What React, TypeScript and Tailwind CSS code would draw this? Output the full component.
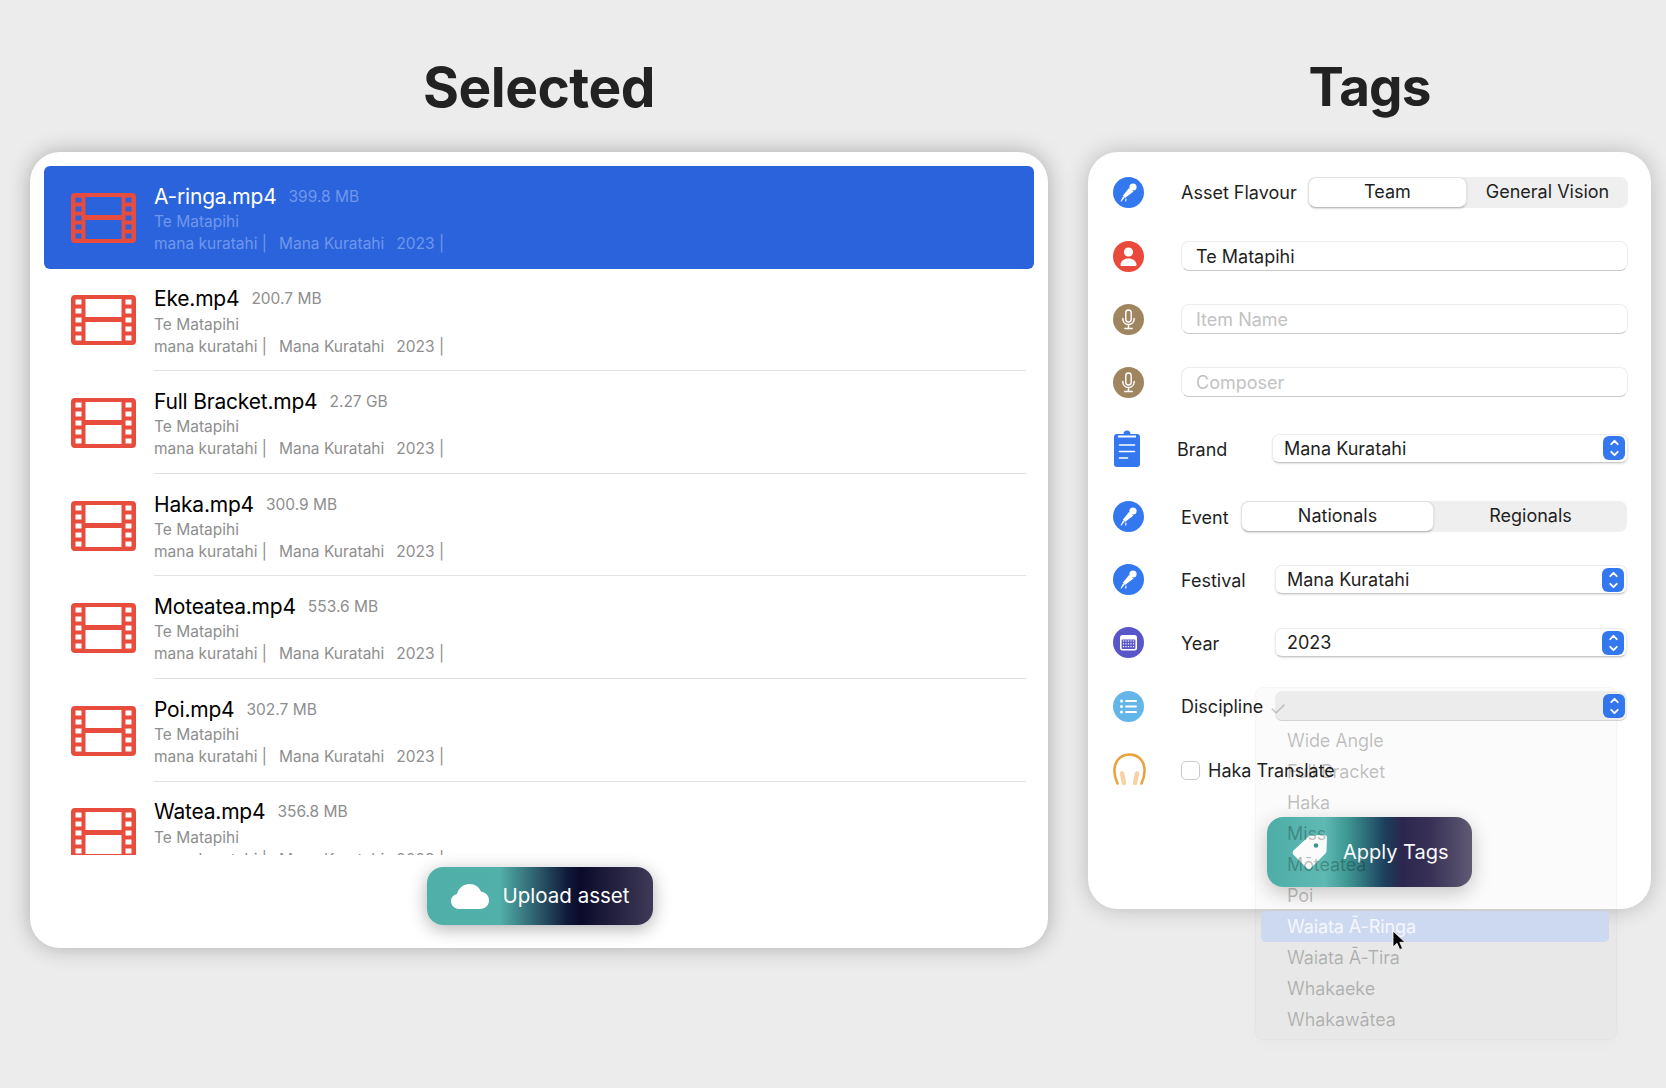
import { ReactNode } from 'react';
import { ChevronDown, ChevronUp } from 'lucide-react';

const assets = [
  { name: 'A-ringa.mp4', size: '399.8 MB' },
  { name: 'Eke.mp4', size: '200.7 MB' },
  { name: 'Full Bracket.mp4', size: '2.27 GB' },
  { name: 'Haka.mp4', size: '300.9 MB' },
  { name: 'Moteatea.mp4', size: '553.6 MB' },
  { name: 'Poi.mp4', size: '302.7 MB' },
  { name: 'Watea.mp4', size: '356.8 MB' },
];

const disciplines = [
  'Wide Angle',
  'Full Bracket',
  'Haka',
  'Miss',
  'Mōteatea',
  'Poi',
  'Waiata Ā-Ringa',
  'Waiata Ā-Tira',
  'Whakaeke',
  'Whakawātea',
];

const box = (x: number, y: number, w: number, h: number) => `M${x} ${y}h${w}v${h}h${-w}z`;
const holeRows = [4.5, 13.5, 22.5, 31.5, 40.5];
const filmPath =
  'M4 0h57a4 4 0 0 1 4 4v42a4 4 0 0 1-4 4H4a4 4 0 0 1-4-4V4a4 4 0 0 1 4-4z' +
  box(14.5, 4, 36, 18) +
  box(14.5, 27, 36, 19) +
  holeRows.map((y) => box(4.5, y, 6, 5) + box(54.5, y, 6, 5)).join('');

function FilmIcon() {
  return (
    <svg viewBox="0 0 65 50" className="w-[65px] h-[50px] shrink-0 mt-[1px]">
      <path d={filmPath} fill="#e74c3c" fillRule="evenodd" />
    </svg>
  );
}

function Badge({ color, children }: { color: string; children: ReactNode }) {
  return (
    <svg viewBox="0 0 31 31" className="w-[31px] h-[31px] shrink-0">
      <circle cx="15.5" cy="15.5" r="15.5" fill={color} />
      {children}
    </svg>
  );
}

function StageMic() {
  return (
    <Badge color="#3478f0">
      <g fill="white">
        <circle cx="20" cy="10" r="3.6" />
        <path d="M16 11l4.500 3.600-8.500 6.400-2.200-2.200z" />
        <path d="M10 19.500l1.500 1.300-3 3.700H7.500z" />
        <path d="M12.500 21.500l1 .3-.2 2.700h-1.100z" />
      </g>
    </Badge>
  );
}

function PersonIcon() {
  return (
    <Badge color="#ea4a3c">
      <g fill="white">
        <circle cx="15.5" cy="11" r="4.6" />
        <path d="M7.500 24c0-4.200 3.600-6.600 8-6.600s8 2.400 8 6.600c0 .6-.4 1-1 1h-14c-.6 0-1-.4-1-1z" />
      </g>
    </Badge>
  );
}

function MicIcon() {
  return (
    <Badge color="#a08660">
      <rect x="12.800" y="6" width="5.400" height="12" rx="2.700" fill="none" stroke="white" strokeWidth="1.400" />
      <path d="M9.800 14.500c0 3.600 2.400 6 5.700 6s5.700-2.400 5.700-6M15.500 20.500v3.600M11.800 24.600h7.400" fill="none" stroke="white" strokeWidth="1.500" strokeLinecap="round" />
    </Badge>
  );
}

function ClipboardIcon() {
  return (
    <svg viewBox="0 0 26 37" className="w-[26px] h-[37px] shrink-0">
      <path d="M3 4h6.500a3.500 3.500 0 0 1 7 0H23a3 3 0 0 1 3 3v27a3 3 0 0 1-3 3H3a3 3 0 0 1-3-3V7a3 3 0 0 1 3-3z" fill="#3478f0" />
      <path d="M4 5.500h18v2H4z" fill="white" />
      <path d="M5.500 15h15M5.500 21.500h15M5.500 28h8" stroke="white" strokeWidth="1.600" strokeLinecap="round" />
    </svg>
  );
}

function CalendarIcon() {
  return (
    <Badge color="#5856c8">
      <rect x="7" y="8" width="17" height="15.500" rx="2.500" fill="white" />
      <rect x="8.600" y="12.400" width="13.800" height="9.600" rx="1" fill="#5856c8" />
      <g fill="white">
        {[14, 16.8, 19.6].map((y) =>
          [10.5, 13, 15.5, 18, 20.5].map((x) => <rect key={`${x}-${y}`} x={x - 0.6} y={y - 0.6} width="1.2" height="1.2" />),
        )}
      </g>
    </Badge>
  );
}

function ListIcon() {
  return (
    <Badge color="#64b5e8">
      <g fill="white">
        <circle cx="8.500" cy="10" r="1.500" />
        <circle cx="8.500" cy="15.500" r="1.500" />
        <circle cx="8.500" cy="21" r="1.500" />
        <rect x="12" y="9" width="12" height="2" rx="1" />
        <rect x="12" y="14.500" width="12" height="2" rx="1" />
        <rect x="12" y="20" width="12" height="2" rx="1" />
      </g>
    </Badge>
  );
}

function HeadphonesIcon() {
  return (
    <svg viewBox="0 0 33 33" className="w-[33px] h-[33px] shrink-0 -mt-[2px] -mr-[2px]">
      <path d="M4.500 30.500C1.500 24 .8 18 2 13 3.500 5.500 9.500 1.500 16.500 1.500S29.500 5.500 31 13c1.200 5 .5 11-2.500 17.500" fill="none" stroke="#e8a33d" strokeWidth="2.600" strokeLinecap="round" />
      <path d="M9 20.500l2 9.500M24 20.500l-2 9.500" fill="none" stroke="#f6d3a4" strokeWidth="4.500" strokeLinecap="round" />
    </svg>
  );
}

function CloudIcon() {
  return (
    <svg viewBox="0 0 38 25" className="w-[38px] h-[25px] shrink-0">
      <path d="M9 25C3.800 25 0 21.600 0 17.200c0-3.700 2.500-6.500 6-7.300C7.600 3.900 12.600 0 18.500 0c5.400 0 9.700 3 11.500 7.800 4.800.6 8 4 8 8.500C38 21.500 34.300 25 29 25z" fill="white" />
    </svg>
  );
}

function TagIcon() {
  return (
    <svg viewBox="0 0 36 36" className="w-[36px] h-[36px] shrink-0">
      <path d="M19 1.500 32.500 1c1.500 0 2.500 1 2.500 2.500l-.5 13.500c0 1-.5 1.800-1.100 2.400L19 34c-1.200 1.200-3 1.200-4.200 0L1.500 20.700c-1.200-1.200-1.200-3 0-4.200L16.600 2.600c.7-.7 1.400-1.100 2.400-1.100z" fill="white" />
      <circle cx="24" cy="11.500" r="2.300" fill="#3c9c97" />
    </svg>
  );
}

function Stepper() {
  return (
    <span className="w-[22px] h-[24px] rounded-[6px] bg-[#3478f0] flex flex-col items-center justify-center text-white">
      <ChevronUp size={13} strokeWidth={3.500} className="-mb-[1px]" />
      <ChevronDown size={13} strokeWidth={3.500} className="-mt-[1px]" />
    </span>
  );
}

function SelectBox({ value, className }: { value: string; className: string }) {
  return (
    <div className={`h-[29px] flex items-center justify-between pl-[11px] pr-[2px] rounded-[7px] bg-white border border-[#ececec] border-b-[#c9c9c9] shadow-[0_1px_2px_rgba(0,0,0,0.12)] ${className}`}>
      <span>{value}</span>
      <Stepper />
    </div>
  );
}

function TextBox({ value, placeholder }: { value?: string; placeholder?: string }) {
  return (
    <div className="ml-[37px] w-[447px] h-[30px] flex items-center px-[14px] rounded-[8px] bg-white border border-[#ececec] border-b-[#c9c9c9]">
      {value ? <span>{value}</span> : <span className="text-[#c2c2c2]">{placeholder}</span>}
    </div>
  );
}

function Segmented({ options, first, className }: { options: [string, string]; first: string; className: string }) {
  return (
    <div className={`h-[31px] flex rounded-[8px] bg-[#efefef] ${className}`}>
      <div className={`${first} pb-[2px] flex items-center justify-center rounded-[8px] bg-white border border-[#e2e2e2] border-b-[#bdbdbd] shadow-[0_1px_2px_rgba(0,0,0,0.15)]`}>
        {options[0]}
      </div>
      <div className="flex-1 pb-[2px] flex items-center justify-center">{options[1]}</div>
    </div>
  );
}

function Popup() {
  return (
    <div className="absolute z-20 left-[-20px] top-[-4px] w-[362px] h-[353px] rounded-[8px] bg-black/[0.015] border border-black/[0.025] shadow-[0_4px_16px_rgba(0,0,0,0.02)]">
      <span className="absolute left-[13px] top-[9px] text-[20px] leading-[24px] text-black/20">✓</span>
      <div className="pt-[37px] pl-[5px] pr-[7px]">
        {disciplines.map((item) => (
          <div
            key={item}
            className={`h-[31px] flex items-center pl-[26px] rounded-[5px] text-[18px] tracking-[-0.1px] ${
              item === 'Waiata Ā-Ringa' ? 'bg-[#cdd9f1] text-white/80' : 'text-black/25'
            }`}
          >
            {item}
          </div>
        ))}
      </div>
    </div>
  );
}

function Cursor() {
  return (
    <svg viewBox="0 0 14 21" className="absolute z-30 left-[117px] top-0 w-[14px] h-[21px]">
      <path d="M1 1v16l4-3.700 2.700 6.300 2.800-1.200-2.700-6.100H13z" fill="black" stroke="white" strokeWidth="0.800" />
    </svg>
  );
}

export default function App() {
  return (
    <div className="w-[1666px] h-[1088px] overflow-hidden bg-[#ececec] pl-[30px] font-[Inter,sans-serif] text-[#1f1f1f] text-[18px] flex gap-[40px]">
      {/* Selected */}
      <section className="w-[1018px] shrink-0">
        <h1 className="h-[152px] pt-[52px] text-center text-[55px] leading-[70px] font-bold tracking-[-0.5px] text-[#222222]">Selected</h1>
        <div className="h-[796px] bg-white rounded-[30px] shadow-[0_0_22px_rgba(0,0,0,0.28)] pt-[14px] px-[14px] flex flex-col">
          <div className="h-[689px] overflow-hidden">
            {assets.map((asset, index) => (
              <div
                key={asset.name}
                className={`h-[102.6px] flex items-center pl-[27px] rounded-[6px] ${index === 0 ? 'bg-[#2a63db]' : ''}`}
              >
                <FilmIcon />
                <div
                  className={`ml-[18px] mr-[8px] flex-1 h-full pt-[17.5px] ${
                    index > 0 && index < assets.length - 1 ? 'border-b border-[#e3e3e3]' : ''
                  }`}
                >
                  <div className="flex items-center gap-[12px] h-[26px]">
                    <span className={`text-[21px] tracking-[-0.2px] ${index === 0 ? 'text-white' : 'text-black'}`}>{asset.name}</span>
                    <span className={`text-[15.5px] ${index === 0 ? 'text-[#7097ec]' : 'text-[#8e8e8e]'}`}>{asset.size}</span>
                  </div>
                  <div className={`text-[15.5px] leading-[22px] mt-[1.5px] ${index === 0 ? 'text-[#7097ec]' : 'text-[#8e8e8e]'}`}>
                    <div>Te Matapihi</div>
                    <div className="flex gap-[12px]">
                      <span>mana kuratahi |</span>
                      <span>Mana Kuratahi</span>
                      <span>2023 |</span>
                    </div>
                  </div>
                </div>
              </div>
            ))}
          </div>
          <button className="self-center ml-[2px] mt-[12px] w-[226px] h-[58px] rounded-[16px] flex items-center justify-center gap-[14px] text-white text-[20.5px] bg-[linear-gradient(90deg,#4fafa9_0%,#52b0aa_32%,#0f1a3a_62%,#0c0a2a_68%,#3e3a58_100%)] shadow-[0_4px_18px_rgba(0,0,0,0.3)]">
            <CloudIcon />
            Upload asset
          </button>
        </div>
      </section>

      {/* Tags */}
      <section className="w-[563px] shrink-0">
        <h1 className="h-[152px] pt-[52px] text-center text-[53px] leading-[70px] font-bold tracking-[-0.9px] text-[#222222]">Tags</h1>
        <div className="h-[757px] bg-white rounded-[30px] shadow-[0_0_22px_rgba(0,0,0,0.22)] pt-[25px] pl-[25px]">
          <div className="h-[31px] flex items-center">
            <StageMic />
            <span className="ml-[37px] w-[127px]">Asset Flavour</span>
            <Segmented options={['Team', 'General Vision']} first="w-[159px]" className="w-[320px]" />
          </div>
          <div className="mt-[33px] h-[30px] flex items-center">
            <PersonIcon />
            <TextBox value="Te Matapihi" />
          </div>
          <div className="mt-[33px] h-[30px] flex items-center">
            <MicIcon />
            <TextBox placeholder="Item Name" />
          </div>
          <div className="mt-[33px] h-[30px] flex items-center">
            <MicIcon />
            <TextBox placeholder="Composer" />
          </div>
          <div className="mt-[36px] h-[30px] flex items-center">
            <div className="w-[31px] flex justify-center pr-[4px]">
              <ClipboardIcon />
            </div>
            <span className="ml-[33px] w-[95px] pt-[2px]">Brand</span>
            <SelectBox value="Mana Kuratahi" className="w-[356px]" />
          </div>
          <div className="mt-[38px] h-[31px] flex items-center">
            <StageMic />
            <span className="ml-[37px] w-[60px] pt-[2px]">Event</span>
            <Segmented options={['Nationals', 'Regionals']} first="w-[193px]" className="w-[386px]" />
          </div>
          <div className="mt-[33px] h-[29px] flex items-center">
            <StageMic />
            <span className="ml-[37px] w-[94px] pt-[2px]">Festival</span>
            <SelectBox value="Mana Kuratahi" className="w-[352px]" />
          </div>
          <div className="mt-[34px] h-[29px] flex items-center">
            <CalendarIcon />
            <span className="ml-[37px] w-[94px] pt-[2px]">Year</span>
            <SelectBox value="2023" className="w-[352px]" />
          </div>
          <div className="mt-[34px] h-[30px] flex items-center">
            <ListIcon />
            <span className="ml-[37px] w-[94px] pt-[1px]">Discipline</span>
            <div className="relative w-[352px]">
              <div className="h-[30px] flex items-center justify-end pr-[2px] rounded-[7px] bg-[#f0f0f0] border-b border-[#d6d6d6]">
                <Stepper />
              </div>
              <Popup />
              <div className="absolute top-[239px] left-0 right-0">
                <Cursor />
              </div>
            </div>
          </div>
          <div className="mt-[34px] h-[31px] flex items-center">
            <HeadphonesIcon />
            <span className="ml-[37px] w-[19px] h-[19px] rounded-[5px] bg-white border border-[#c9c9c9]" />
            <span className="ml-[8px]">Haka Translate</span>
          </div>
          <button className="ml-[154px] mt-[31px] w-[205px] h-[70px] rounded-[16px] flex items-center pl-[25px] gap-[15px] text-white text-[20px] bg-[linear-gradient(90deg,#4fb0aa_0%,#61bcb6_28%,#3d9794_40%,#1d3f5d_58%,#2d2750_66%,#3a3258_80%,#625d76_100%)] shadow-[0_6px_20px_rgba(0,0,0,0.22)]">
            <TagIcon />
            Apply Tags
          </button>
        </div>
      </section>
    </div>
  );
}
